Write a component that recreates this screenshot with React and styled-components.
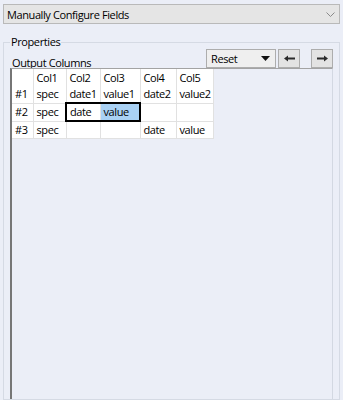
import React from "react";
import styled, { createGlobalStyle } from "styled-components";

const GlobalStyle = createGlobalStyle`
  html, body { margin: 0; padding: 0; background: #ebeef7; }
  body {
    font-family: "Open Sans", "Noto Sans", sans-serif;
    font-size: 11px;
    letter-spacing: -0.4px;
    color: #000;
  }
`;

const Page = styled.div`
  height: 400px;
  padding: 4px 3px 0;
  box-sizing: border-box;
  overflow: hidden;
  display: flex;
  flex-direction: column;
`;

const ModeSelect = styled.div`
  height: 20px;
  box-sizing: border-box;
  border: 1px solid #b9b9b9;
  background: #e5e5e5;
  display: flex;
  align-items: center;
  justify-content: space-between;
  padding: 0 4px 0 3px;
  svg { display: block; }
`;

const Group = styled.fieldset`
  margin: 11px 0 0;
  padding: 0 6px;
  border: 1px solid #d5dae4;
  flex: 1;
  min-height: 0;
  display: flex;
  flex-direction: column;
  legend {
    padding: 0 1px;
    line-height: 14px;
  }
`;

const Toolbar = styled.div`
  display: flex;
  align-items: flex-end;
  height: 19px;
`;

const Label = styled.span`
  margin-right: auto;
  padding-left: 2px;
  line-height: 12px;
  margin-bottom: -1px;
`;

const Dropdown = styled.div`
  width: 70px;
  height: 19px;
  box-sizing: border-box;
  border: 1px solid #adadad;
  background: #efefef;
  display: flex;
  align-items: center;
  justify-content: space-between;
  padding: 0 5px 0 4px;
`;

const ArrowButton = styled.button`
  width: 22px;
  height: 19px;
  margin-left: ${(p) => p.$gap}px;
  box-sizing: border-box;
  border: 1px solid #adadad;
  background: #e3e3e3;
  padding: 0;
  display: flex;
  align-items: center;
  justify-content: center;
`;

const GridPanel = styled.div`
  flex: 1;
  border-top: 1px solid #a3a3a3;
  border-left: 2px solid #767676;
  border-right: 1px solid #d3d8e2;
`;

const Table = styled.table`
  border-collapse: collapse;
  table-layout: fixed;
  width: 201px;
  background: #fff;
`;

const Cell = styled.td`
  height: 16px;
  padding: 0 0 0 3px;
  line-height: 16px;
  white-space: nowrap;
  overflow: hidden;
  border: 1px solid #e1e1e1;
  background: ${(p) => (p.$hl ? "#a9d1f4" : "#fff")};
  ${(p) => p.$head && "border-top: hidden; border-bottom: hidden; height: 17px;"}
  ${(p) => p.$first && "border-left: hidden;"}
  ${(p) => p.$selL && "border-left: 2px solid #000;"}
  ${(p) => p.$selR && "border-right: 2px solid #000;"}
  ${(p) => (p.$selL || p.$selR) && "border-top: 2px solid #000; border-bottom: 2px solid #000;"}
`;

const widths = [21, 33, 34, 40, 36, 37];
const rows = [
  ["#1", "spec", "date1", "value1", "date2", "value2"],
  ["#2", "spec", "date", "value", "", ""],
  ["#3", "spec", "", "", "date", "value"],
];

const Chevron = () => (
  <svg width="9" height="5" viewBox="0 0 9 5">
    <path d="M0.5 0.5 L4.5 4.5 L8.5 0.5" fill="none" stroke="#8a8a8a" strokeWidth="1" />
  </svg>
);

const Caret = () => (
  <svg width="9" height="5" viewBox="0 0 9 5">
    <path d="M0 0 H9 L4.5 5 Z" fill="#111" />
  </svg>
);

const Arrow = ({ dir }) => (
  <svg width="11" height="7" viewBox="0 0 11 7" style={{ transform: dir === "right" ? "scaleX(-1)" : "none" }}>
    <path d="M0 3.5 L4 0.5 V2.5 H11 V4.5 H4 V6.5 Z" fill="#2b2b2b" />
  </svg>
);

export default function App() {
  return (
    <Page>
      <GlobalStyle />
      <ModeSelect>
        <span>Manually Configure Fields</span>
        <Chevron />
      </ModeSelect>
      <Group>
        <legend>Properties</legend>
        <Toolbar>
          <Label>Output Columns</Label>
          <Dropdown>
            <span>Reset</span>
            <Caret />
          </Dropdown>
          <ArrowButton $gap={2}>
            <Arrow dir="left" />
          </ArrowButton>
          <ArrowButton $gap={11}>
            <Arrow dir="right" />
          </ArrowButton>
        </Toolbar>
        <GridPanel>
          <Table>
            <colgroup>
              {widths.map((w, i) => (
                <col key={i} style={{ width: w }} />
              ))}
            </colgroup>
            <tbody>
              <tr>
                <Cell $head $first />
                {["Col1", "Col2", "Col3", "Col4", "Col5"].map((c) => (
                  <Cell key={c} $head>{c}</Cell>
                ))}
              </tr>
              {rows.map((r, ri) => (
                <tr key={r[0]}>
                  {r.map((v, ci) => (
                    <Cell
                      key={ci}
                      $first={ci === 0}
                      $selL={ri === 1 && ci === 2}
                      $selR={ri === 1 && ci === 3}
                      $hl={ri === 1 && ci === 3}
                    >
                      {v}
                    </Cell>
                  ))}
                </tr>
              ))}
            </tbody>
          </Table>
        </GridPanel>
      </Group>
    </Page>
  );
}
